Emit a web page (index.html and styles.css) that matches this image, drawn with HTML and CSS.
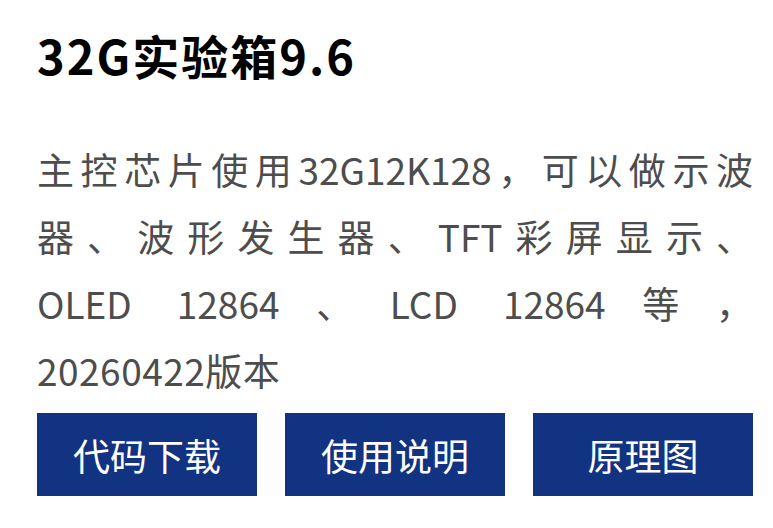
FILE: index.html
```html
<!DOCTYPE html>
<html lang="zh-CN">
<head>
<meta charset="utf-8">
<title>32G实验箱9.6</title>
<link rel="stylesheet" href="styles.css">
</head>
<body>
<main class="card">
  <h1 class="title">32G实验箱9.6</h1>
  <div class="desc">
    <span class="ln">主控芯片使用32G12K128，可以做示波</span>
    <span class="ln">器、波形发生器、TFT彩屏显示、</span>
    <span class="ln">OLED 12864、LCD 12864等，</span>
    <span class="ln last">20260422版本</span>
  </div>
  <div class="actions">
    <a class="btn" href="#">代码下载</a>
    <a class="btn" href="#">使用说明</a>
    <a class="btn" href="#">原理图</a>
  </div>
</main>
</body>
</html>
```
FILE: styles.css
```css
html, body {
  margin: 0;
  padding: 0;
  background: #ffffff;
}
.card {
  padding: 25px 20px 0 37px;
  font-family: "Noto Sans CJK SC", "Noto Sans", sans-serif;
}
.title {
  margin: 0;
  font-size: 47px;
  line-height: 60px;
  font-weight: 700;
  letter-spacing: 2px;
  color: #000000;
}
.desc {
  margin-top: 51px;
  font-size: 37px;
  line-height: 67px;
  color: #4d4d4d;
}
.ln {
  display: block;
  text-align: justify;
  text-align-last: justify;
  white-space: nowrap;
}
.ln.last {
  text-align: left;
  text-align-last: left;
  letter-spacing: 0.5px;
}
.actions {
  margin-top: 9px;
  display: flex;
  gap: 28px;
}
.btn {
  width: 220px;
  height: 83px;
  display: flex;
  align-items: center;
  justify-content: center;
  background: #123282;
  color: #ffffff;
  font-size: 37px;
  text-decoration: none;
}
```
